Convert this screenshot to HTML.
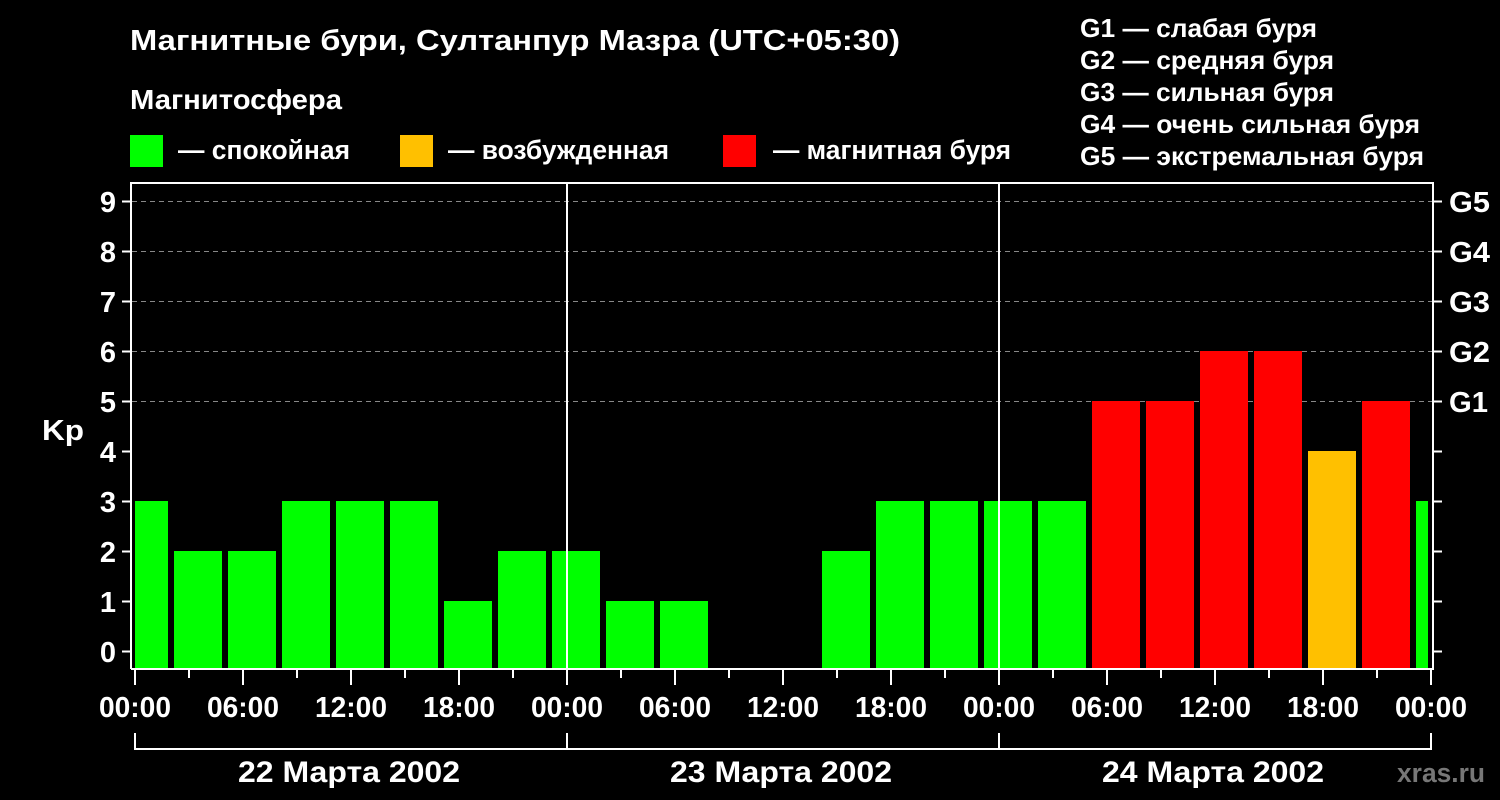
<!DOCTYPE html>
<html><head><meta charset="utf-8"><style>
html,body{margin:0;padding:0;background:#000;}
svg{display:block;font-family:"Liberation Sans",Arial,sans-serif;font-weight:bold;}
</style></head><body>
<svg width="1500" height="800" viewBox="0 0 1500 800" xmlns="http://www.w3.org/2000/svg">
<rect width="1500" height="800" fill="#000"/>
<g fill="#fff">
<text x="130" y="50" font-size="29" textLength="770" lengthAdjust="spacingAndGlyphs">Магнитные бури, Султанпур Мазра (UTC+05:30)</text>
<text x="130" y="109" font-size="28" textLength="212" lengthAdjust="spacingAndGlyphs">Магнитосфера</text>
<text x="178" y="159" font-size="27" textLength="172" lengthAdjust="spacingAndGlyphs">— спокойная</text>
<text x="448" y="159" font-size="27" textLength="221" lengthAdjust="spacingAndGlyphs">— возбужденная</text>
<text x="773" y="159" font-size="27" textLength="238" lengthAdjust="spacingAndGlyphs">— магнитная буря</text>
<text x="1080" y="37" font-size="26" textLength="237" lengthAdjust="spacingAndGlyphs">G1 — слабая буря</text>
<text x="1080" y="69" font-size="26" textLength="254" lengthAdjust="spacingAndGlyphs">G2 — средняя буря</text>
<text x="1080" y="101" font-size="26" textLength="254" lengthAdjust="spacingAndGlyphs">G3 — сильная буря</text>
<text x="1080" y="133" font-size="26" textLength="340" lengthAdjust="spacingAndGlyphs">G4 — очень сильная буря</text>
<text x="1080" y="165" font-size="26" textLength="344" lengthAdjust="spacingAndGlyphs">G5 — экстремальная буря</text>
</g>
<rect x="130" y="135" width="33" height="32" fill="#00ff00"/>
<rect x="400" y="135" width="33" height="32" fill="#ffc000"/>
<rect x="723" y="135" width="33" height="32" fill="#ff0000"/>

<g stroke="#888" stroke-width="1" stroke-dasharray="5,4">
<line x1="132" y1="201.5" x2="1432" y2="201.5"/>
<line x1="132" y1="251.5" x2="1432" y2="251.5"/>
<line x1="132" y1="301.5" x2="1432" y2="301.5"/>
<line x1="132" y1="351.5" x2="1432" y2="351.5"/>
<line x1="132" y1="401.5" x2="1432" y2="401.5"/>
</g>

<g>
<rect x="135" y="501" width="33" height="167" fill="#00ff00"/>
<rect x="174" y="551" width="48" height="117" fill="#00ff00"/>
<rect x="228" y="551" width="48" height="117" fill="#00ff00"/>
<rect x="282" y="501" width="48" height="167" fill="#00ff00"/>
<rect x="336" y="501" width="48" height="167" fill="#00ff00"/>
<rect x="390" y="501" width="48" height="167" fill="#00ff00"/>
<rect x="444" y="601" width="48" height="67" fill="#00ff00"/>
<rect x="498" y="551" width="48" height="117" fill="#00ff00"/>
<rect x="552" y="551" width="48" height="117" fill="#00ff00"/>
<rect x="606" y="601" width="48" height="67" fill="#00ff00"/>
<rect x="660" y="601" width="48" height="67" fill="#00ff00"/>
<rect x="822" y="551" width="48" height="117" fill="#00ff00"/>
<rect x="876" y="501" width="48" height="167" fill="#00ff00"/>
<rect x="930" y="501" width="48" height="167" fill="#00ff00"/>
<rect x="984" y="501" width="48" height="167" fill="#00ff00"/>
<rect x="1038" y="501" width="48" height="167" fill="#00ff00"/>
<rect x="1092" y="401" width="48" height="267" fill="#ff0000"/>
<rect x="1146" y="401" width="48" height="267" fill="#ff0000"/>
<rect x="1200" y="351" width="48" height="317" fill="#ff0000"/>
<rect x="1254" y="351" width="48" height="317" fill="#ff0000"/>
<rect x="1308" y="451" width="48" height="217" fill="#ffc000"/>
<rect x="1362" y="401" width="48" height="267" fill="#ff0000"/>
<rect x="1416" y="501" width="12" height="167" fill="#00ff00"/>
</g>

<g stroke="#fff" stroke-width="2" fill="none">
<path d="M131 669 V183 H1433 V669 H131"/>
<line x1="567" y1="183" x2="567" y2="669"/>
<line x1="999" y1="183" x2="999" y2="669"/>
</g>
<g stroke="#fff" stroke-width="2">
<line x1="122" y1="201.5" x2="131" y2="201.5"/><line x1="1433" y1="201.5" x2="1442" y2="201.5"/>
<line x1="122" y1="251.5" x2="131" y2="251.5"/><line x1="1433" y1="251.5" x2="1442" y2="251.5"/>
<line x1="122" y1="301.5" x2="131" y2="301.5"/><line x1="1433" y1="301.5" x2="1442" y2="301.5"/>
<line x1="122" y1="351.5" x2="131" y2="351.5"/><line x1="1433" y1="351.5" x2="1442" y2="351.5"/>
<line x1="122" y1="401.5" x2="131" y2="401.5"/><line x1="1433" y1="401.5" x2="1442" y2="401.5"/>
<line x1="122" y1="451.5" x2="131" y2="451.5"/><line x1="1433" y1="451.5" x2="1442" y2="451.5"/>
<line x1="122" y1="501.5" x2="131" y2="501.5"/><line x1="1433" y1="501.5" x2="1442" y2="501.5"/>
<line x1="122" y1="551.5" x2="131" y2="551.5"/><line x1="1433" y1="551.5" x2="1442" y2="551.5"/>
<line x1="122" y1="601.5" x2="131" y2="601.5"/><line x1="1433" y1="601.5" x2="1442" y2="601.5"/>
<line x1="122" y1="651.5" x2="131" y2="651.5"/><line x1="1433" y1="651.5" x2="1442" y2="651.5"/>
</g>
<g fill="#fff" font-size="29" text-anchor="end">
<text x="116" y="212">9</text><text x="116" y="262">8</text><text x="116" y="312">7</text>
<text x="116" y="362">6</text><text x="116" y="412">5</text><text x="116" y="462">4</text>
<text x="116" y="512">3</text><text x="116" y="562">2</text><text x="116" y="612">1</text>
<text x="116" y="662">0</text>
</g>
<text x="42" y="440" fill="#fff" font-size="29" textLength="42" lengthAdjust="spacingAndGlyphs">Kp</text>
<g fill="#fff" font-size="29">
<text x="1449" y="212" textLength="41" lengthAdjust="spacingAndGlyphs">G5</text><text x="1449" y="262" textLength="41" lengthAdjust="spacingAndGlyphs">G4</text><text x="1449" y="312" textLength="41" lengthAdjust="spacingAndGlyphs">G3</text>
<text x="1449" y="362" textLength="41" lengthAdjust="spacingAndGlyphs">G2</text><text x="1449" y="412" textLength="39" lengthAdjust="spacingAndGlyphs">G1</text>
</g>
<g stroke="#fff" stroke-width="2">
<line x1="135" y1="669" x2="135" y2="685"/><line x1="189" y1="669" x2="189" y2="678"/>
<line x1="243" y1="669" x2="243" y2="685"/><line x1="297" y1="669" x2="297" y2="678"/>
<line x1="351" y1="669" x2="351" y2="685"/><line x1="405" y1="669" x2="405" y2="678"/>
<line x1="459" y1="669" x2="459" y2="685"/><line x1="513" y1="669" x2="513" y2="678"/>
<line x1="567" y1="669" x2="567" y2="685"/><line x1="621" y1="669" x2="621" y2="678"/>
<line x1="675" y1="669" x2="675" y2="685"/><line x1="729" y1="669" x2="729" y2="678"/>
<line x1="783" y1="669" x2="783" y2="685"/><line x1="837" y1="669" x2="837" y2="678"/>
<line x1="891" y1="669" x2="891" y2="685"/><line x1="945" y1="669" x2="945" y2="678"/>
<line x1="999" y1="669" x2="999" y2="685"/><line x1="1053" y1="669" x2="1053" y2="678"/>
<line x1="1107" y1="669" x2="1107" y2="685"/><line x1="1161" y1="669" x2="1161" y2="678"/>
<line x1="1215" y1="669" x2="1215" y2="685"/><line x1="1269" y1="669" x2="1269" y2="678"/>
<line x1="1323" y1="669" x2="1323" y2="685"/><line x1="1377" y1="669" x2="1377" y2="678"/>
<line x1="1431" y1="669" x2="1431" y2="685"/>
</g>
<g fill="#fff" font-size="29" text-anchor="middle" lengthAdjust="spacingAndGlyphs">
<text x="135" y="717" textLength="72" lengthAdjust="spacingAndGlyphs">00:00</text><text x="243" y="717" textLength="72" lengthAdjust="spacingAndGlyphs">06:00</text><text x="351" y="717" textLength="72" lengthAdjust="spacingAndGlyphs">12:00</text>
<text x="459" y="717" textLength="72" lengthAdjust="spacingAndGlyphs">18:00</text><text x="567" y="717" textLength="72" lengthAdjust="spacingAndGlyphs">00:00</text><text x="675" y="717" textLength="72" lengthAdjust="spacingAndGlyphs">06:00</text>
<text x="783" y="717" textLength="72" lengthAdjust="spacingAndGlyphs">12:00</text><text x="891" y="717" textLength="72" lengthAdjust="spacingAndGlyphs">18:00</text><text x="999" y="717" textLength="72" lengthAdjust="spacingAndGlyphs">00:00</text>
<text x="1107" y="717" textLength="72" lengthAdjust="spacingAndGlyphs">06:00</text><text x="1215" y="717" textLength="72" lengthAdjust="spacingAndGlyphs">12:00</text><text x="1323" y="717" textLength="72" lengthAdjust="spacingAndGlyphs">18:00</text>
<text x="1431" y="717" textLength="72" lengthAdjust="spacingAndGlyphs">00:00</text>
</g>
<g stroke="#fff" stroke-width="2" fill="none">
<path d="M135 733 V749 H1431 V733"/>
<line x1="567" y1="733" x2="567" y2="749"/>
<line x1="999" y1="733" x2="999" y2="749"/>
</g>
<g fill="#fff" font-size="30" text-anchor="middle">
<text x="349" y="782" textLength="222" lengthAdjust="spacingAndGlyphs">22 Марта 2002</text>
<text x="781" y="782" textLength="222" lengthAdjust="spacingAndGlyphs">23 Марта 2002</text>
<text x="1213" y="782" textLength="222" lengthAdjust="spacingAndGlyphs">24 Марта 2002</text>
</g>
<text x="1485" y="782" fill="#777" font-size="27" text-anchor="end" textLength="88" lengthAdjust="spacingAndGlyphs">xras.ru</text>
</svg>
</body></html>
